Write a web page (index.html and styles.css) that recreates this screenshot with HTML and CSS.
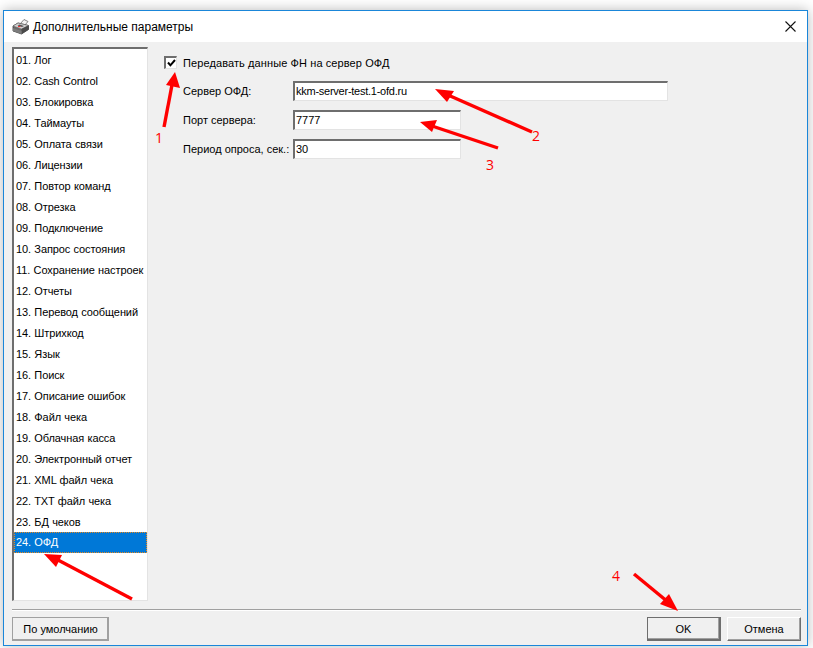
FILE: index.html
```html
<!DOCTYPE html>
<html lang="ru">
<head>
<meta charset="utf-8">
<title>Дополнительные параметры</title>
<link rel="stylesheet" href="styles.css">
</head>
<body>
<div class="window">
  <header class="titlebar">
    <svg class="app-icon" width="18" height="17" viewBox="0 0 18 17">
      <path d="M8 6 L12 1.5 L16 3.5 L12.5 7.5 Z" fill="#f4f4f4" stroke="#666" stroke-width=".8"/>
      <path d="M1 8 L6 5 L16.5 7.5 L16.5 11.5 L9.5 16 L1 13 Z" fill="#6b6b6b" stroke="#3a3a3a" stroke-width=".8"/>
      <path d="M1 8 L9.5 11 L16.5 7.5 L6 5 Z" fill="#d2d2d2" stroke="#666" stroke-width=".6"/>
      <path d="M9.5 11 L9.5 16 L16.5 11.5 L16.5 7.5 Z" fill="#4a4a4a"/>
      <path d="M1 10 L9.5 13 L9.5 16 L1 13 Z" fill="#7c7c7c"/>
      <path d="M5.5 7.5 L10 9 L12 8 L7.5 6.5 Z" fill="#555"/>
      <rect x="6" y="8" width="2.4" height="1.1" fill="#e33"/>
    </svg>
    <span class="title">Дополнительные параметры</span>
    <svg class="close" width="11" height="11" viewBox="0 0 11 11">
      <path d="M.5 .5 L10.5 10.5 M10.5 .5 L.5 10.5" stroke="#111" stroke-width="1.1" fill="none"/>
    </svg>
  </header>
  <div class="client">
    <div class="main">
      <ul class="list">
        <li>01. Лог</li>
        <li>02. Cash Control</li>
        <li>03. Блокировка</li>
        <li>04. Таймауты</li>
        <li>05. Оплата связи</li>
        <li>06. Лицензии</li>
        <li>07. Повтор команд</li>
        <li>08. Отрезка</li>
        <li>09. Подключение</li>
        <li>10. Запрос состояния</li>
        <li>11. Сохранение настроек</li>
        <li>12. Отчеты</li>
        <li>13. Перевод сообщений</li>
        <li>14. Штрихкод</li>
        <li>15. Язык</li>
        <li>16. Поиск</li>
        <li>17. Описание ошибок</li>
        <li>18. Файл чека</li>
        <li>19. Облачная касса</li>
        <li>20. Электронный отчет</li>
        <li>21. XML файл чека</li>
        <li>22. TXT файл чека</li>
        <li>23. БД чеков</li>
        <li class="selected">24. ОФД</li>
      </ul>
      <div class="panel">
        <label class="check-row">
          <span class="checkbox">
            <svg width="9" height="8" viewBox="0 0 9 8"><path d="M1 3.5 L3.4 6.3 L8 1" fill="none" stroke="#000" stroke-width="2"/></svg>
          </span>
          <span>Передавать данные ФН на сервер ОФД</span>
        </label>
        <div class="fields">
          <span class="field-label">Сервер ОФД:</span>
          <div class="input wide">kkm-server-test.1-ofd.ru</div>
          <span class="field-label">Порт сервера:</span>
          <div class="input">7777</div>
          <span class="field-label">Период опроса, сек.:</span>
          <div class="input">30</div>
        </div>
      </div>
    </div>
    <footer class="footer">
      <button class="btn btn-default" type="button">По умолчанию</button>
      <div class="footer-right">
        <button class="btn btn-ok" type="button">OK</button>
        <button class="btn btn-cancel" type="button">Отмена</button>
      </div>
    </footer>
  </div>
</div>

<svg class="annotations" width="813" height="648" viewBox="0 0 813 648">
  <g stroke="#f00" stroke-width="3.4" fill="#f00">
    <line x1="164" y1="127" x2="172" y2="85"/>
    <line x1="532" y1="132" x2="448" y2="95"/>
    <line x1="498" y1="148" x2="432" y2="126"/>
    <line x1="132" y1="599" x2="58" y2="560"/>
    <line x1="634" y1="574" x2="668" y2="602"/>
  </g>
  <g fill="#f00">
    <polygon points="175,72 180,88 166,85"/>
    <polygon points="435,89 454,91 447,102"/>
    <polygon points="420,122 437,120 432,132"/>
    <polygon points="44,554 62,555 56,567"/>
    <polygon points="678,611 660,604 669,594"/>
  </g>
  <g class="num">
    <text x="155" y="143">1</text>
    <text x="532" y="141">2</text>
    <text x="486" y="170">3</text>
    <text x="612" y="581">4</text>
  </g>
</svg>
</body>
</html>
```
FILE: styles.css
```css
* { box-sizing: border-box; }
html, body { margin: 0; padding: 0; height: 100%; }
body {
  width: 813px;
  height: 648px;
  overflow: hidden;
  background: #fff;
  padding: 10px 5px 2px 3px;
  font-family: "Liberation Sans", Tahoma, sans-serif;
  font-size: 11px;
  letter-spacing: .1px;
  color: #000;
  position: relative;
}
.window {
  height: 636px;
  border: 1px solid #1a86d9;
  display: flex;
  flex-direction: column;
  box-shadow: 0 0 12px rgba(0,0,0,.28);
  background: #f0f0f0;
}
.titlebar {
  height: 31px;
  flex: none;
  background: #fff;
  display: flex;
  align-items: center;
  padding: 0 11px 0 8px;
}
.app-icon { flex: none; }
.title { margin-left: 3px; font-size: 12px; letter-spacing: 0; color: #000; flex: 1; }
.client {
  flex: 1;
  display: flex;
  flex-direction: column;
  padding: 5px 6px 4px 8px;
  min-height: 0;
}
.main { flex: 1; display: flex; min-height: 0; }
.list {
  list-style: none;
  margin: 0;
  padding: 0;
  width: 136px;
  flex: none;
  height: 554px;
  background: #fff;
  border: 2px solid #6e6e6e;
  border-right: 1px solid #e3e3e3;
  border-bottom: 1px solid #e3e3e3;
  letter-spacing: -.1px;
}
.list li {
  height: 21px;
  line-height: 23px;
  padding-left: 2px;
  white-space: nowrap;
  overflow: hidden;
  word-spacing: .4px;
}
.list li.selected {
  background: #0078d7;
  color: #fff;
  outline: 1px dotted #e98a1f;
  outline-offset: -1px;
  line-height: 21px;
}
.panel { flex: 1; padding: 9px 0 0 16px; }
.check-row { display: flex; align-items: center; gap: 6px; height: 13px; }
.checkbox {
  width: 13px;
  height: 13px;
  background: #fff;
  border: 2px solid #6e6e6e;
  border-right: 1px solid #e3e3e3;
  border-bottom: 1px solid #e3e3e3;
  display: flex;
  align-items: center;
  justify-content: center;
  flex: none;
}
.fields {
  display: grid;
  grid-template-columns: 110px auto;
  justify-content: start;
  align-items: center;
  row-gap: 9px;
  margin: 12px 0 0 19px;
  letter-spacing: 0;
}
.field-label { white-space: nowrap; }
.input {
  width: 168px;
  height: 20px;
  background: #fff;
  border: 2px solid #6e6e6e;
  border-right: 1px solid #e3e3e3;
  border-bottom: 1px solid #e3e3e3;
  line-height: 17px;
  padding-left: 1px;
}
.input.wide { width: 375px; letter-spacing: -.25px; }
.footer {
  flex: none;
  border-top: 1px solid #a0a0a0;
  padding-top: 7px;
  display: flex;
  justify-content: space-between;
  height: 32px;
  box-shadow: inset 0 1px 0 #fff;
}
.footer-right { display: flex; gap: 6px; }
.btn {
  height: 24px;
  font: inherit;
  letter-spacing: 0;
  color: #000;
  background: #f0f0f0;
  border: 1px solid;
  border-color: #fff #6e6e6e #6e6e6e #fff;
  box-shadow: inset -1px -1px 0 #a0a0a0;
  padding: 0;
}
.btn-default { width: 97px; outline: 1px solid #a0a0a0; outline-offset: -1px; border-color: #e8e8e8 #6e6e6e #6e6e6e #e8e8e8; }
.btn-ok { width: 74px; border: 2px solid #6e6e6e; border-top-width: 1px; border-left-width: 1px; }
.btn-cancel { width: 74px; }
.annotations { position: absolute; left: 0; top: 0; pointer-events: none; }
.num { font-family: "Open Sans", sans-serif; font-size: 14px; fill: #f00; }
```
